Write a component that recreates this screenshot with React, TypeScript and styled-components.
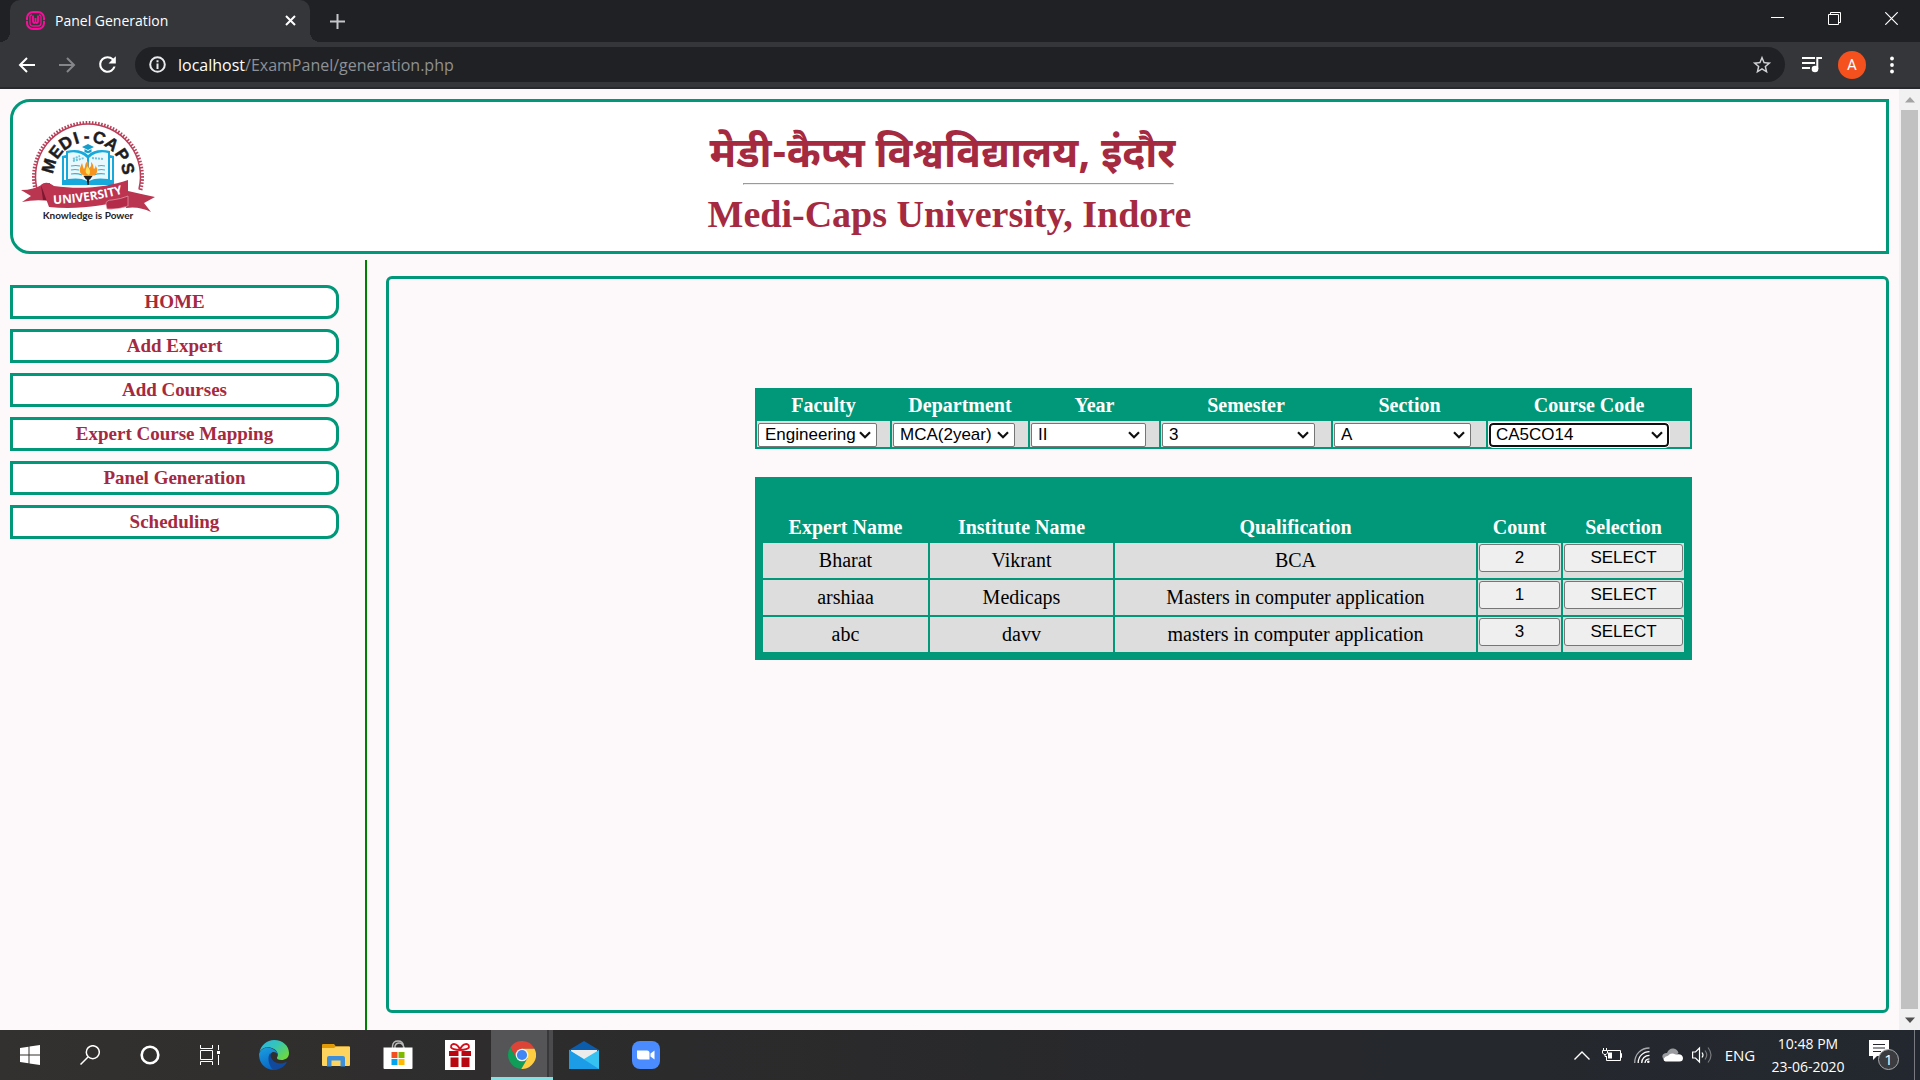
import React from "react";
import styled, { createGlobalStyle } from "styled-components";

const GREEN = "#009879";
const MAROON = "#a52a40";
const PAPER = "#fdf9fb";
const UI_FONT = '"Open Sans", "Noto Sans", sans-serif';
const SERIF = '"Liberation Serif", "Times New Roman", serif';
const SANS = '"Liberation Sans", Arial, sans-serif';

const GlobalStyle = createGlobalStyle`
  *, *::before, *::after { box-sizing: border-box; }
  body { margin: 0; background: ${PAPER}; }
  button { font: inherit; color: inherit; }
`;

const Desktop = styled.div`
  display: flex;
  flex-direction: column;
  min-height: 100vh;
  font-family: ${UI_FONT};
`;

/* ---------- browser frame ---------- */

const TabStrip = styled.div`
  display: flex;
  height: 42px;
  padding-left: 10px;
  background: #202124;
  color: #fff;
`;

const Tab = styled.div`
  position: relative;
  display: flex;
  align-items: center;
  gap: 10px;
  width: 300px;
  padding: 0 10px 2px 16px;
  border-radius: 10px 10px 0 0;
  background: #35363a;
  font-size: 14px;

  &::before,
  &::after {
    content: "";
    position: absolute;
    bottom: 0;
    width: 10px;
    height: 10px;
  }
  &::before {
    right: 100%;
    background: radial-gradient(circle at 0 0, transparent 10px, #35363a 10px);
  }
  &::after {
    left: 100%;
    background: radial-gradient(circle at 100% 0, transparent 10px, #35363a 10px);
  }
`;

const TabTitle = styled.span`
  flex: 1;
`;

const IconButton = styled.button<{ $w?: number }>`
  display: flex;
  align-items: center;
  justify-content: center;
  flex: none;
  width: ${(p) => p.$w ?? 40}px;
  height: 36px;
  padding: 0;
  border: 0;
  background: none;
`;

const NewTab = styled(IconButton)`
  height: 42px;
  margin-left: 7px;
`;

const WindowButtons = styled.div`
  display: flex;
  margin-left: auto;
`;

const Toolbar = styled.div`
  display: flex;
  align-items: center;
  height: 47px;
  padding: 0 8px 0 7px;
  border-bottom: 2px solid #28292c;
  background: #35363a;
  color: #fff;
`;

const Omnibox = styled.div`
  display: flex;
  align-items: center;
  flex: 1;
  height: 35px;
  margin: 0 7px 0 8px;
  padding: 0 3px 0 14px;
  border-radius: 18px;
  background: #202124;
  font-size: 16px;
`;

const Url = styled.a`
  flex: 1;
  margin-left: 12px;
  color: #8e9196;
  text-decoration: none;
`;

const Host = styled.span`
  color: #fff;
`;

const Avatar = styled.span`
  display: flex;
  align-items: center;
  justify-content: center;
  width: 28px;
  height: 28px;
  border-radius: 50%;
  background: #f4511e;
  font: 15px Roboto, sans-serif;
`;

/* ---------- page ---------- */

const Viewport = styled.div`
  display: flex;
  flex: 1;
  background: ${PAPER};
`;

const Page = styled.div`
  display: flex;
  flex-direction: column;
  flex: 1;
  padding: 10px 10px 0;
  font-family: ${SERIF};
  font-size: 20px;
`;

const Scrollbar = styled.div`
  display: flex;
  flex-direction: column;
  width: 21px;
  background: #f1f1f1;
`;

const ScrollArrow = styled.button`
  display: flex;
  align-items: center;
  justify-content: center;
  height: 21px;
  padding: 0;
  border: 0;
  background: none;
`;

const Thumb = styled.div`
  flex: 1;
  margin: 0 2px;
  background: #c1c1c1;
`;

const Banner = styled.header`
  display: grid;
  grid-template-columns: 1fr auto 1fr;
  height: 155px;
  border: 3px solid ${GREEN};
  border-radius: 20px 0 0 20px;
  background: #fff;
  color: ${MAROON};
`;

const LogoBox = styled.div`
  padding: 16px 0 0 5px;
`;

const Titles = styled.div`
  display: flex;
  flex-direction: column;
  align-items: center;
`;

const HindiTitle = styled.h1`
  margin: 29px 14px 0 0;
  font: bold 41px/52px "Noto Sans Devanagari", "Nirmala UI", "Noto Sans", "Liberation Serif", sans-serif;
`;

const Rule = styled.hr`
  align-self: flex-end;
  width: 431px;
  margin: 0 17px 0 0;
  border: 1px inset #eee;
`;

const EnglishTitle = styled.h2`
  margin: 7px 0 0;
  font-size: 38px;
  line-height: 44px;
`;

const Body = styled.div`
  display: flex;
  flex: 1;
  margin-top: 6px;
`;

const Sidebar = styled.nav`
  display: flex;
  flex-direction: column;
  gap: 10px;
  flex: 0 0 357px;
  padding: 25px 26px 0 0;
  border-right: 2px solid green;
`;

const NavLink = styled.a`
  height: 34px;
  border: 3px solid ${GREEN};
  border-radius: 0 12px 12px 0;
  background: #fff;
  color: ${MAROON};
  font-size: 19px;
  font-weight: bold;
  line-height: 28px;
  text-align: center;
  text-decoration: none;
`;

const Panel = styled.main`
  display: flex;
  flex-direction: column;
  align-items: flex-end;
  gap: 28px;
  flex: 1;
  margin: 16px 0 17px 19px;
  padding: 109px 194px 0 0;
  border: 3px solid ${GREEN};
  border-radius: 6px;
`;

const Table = styled.table<{ $frame?: number }>`
  width: 937px;
  border: ${(p) => p.$frame ?? 0}px solid ${GREEN};
  border-collapse: separate;
  border-spacing: 2px;
  table-layout: fixed;
  background: ${GREEN};
  text-align: center;
`;

const Col = styled.col<{ $w: number }>`
  width: ${(p) => p.$w}px;
`;

const Th = styled.th<{ $h: number }>`
  height: ${(p) => p.$h}px;
  padding: 0 0 1px;
  color: #fff;
  line-height: 26px;
  vertical-align: bottom;
`;

const Td = styled.td<{ $h: number; $top?: boolean }>`
  height: ${(p) => p.$h}px;
  padding: ${(p) => (p.$top ? "1px 1px 0" : "0")};
  background: #ddd;
  vertical-align: ${(p) => (p.$top ? "top" : "middle")};
`;

const Picker = styled.label<{ $w: number }>`
  display: grid;
  width: ${(p) => p.$w}px;
  margin-top: 1px;

  > * { grid-area: 1 / 1; }
  > svg { align-self: center; justify-self: end; margin-right: 6px; pointer-events: none; }
`;

const Select = styled.select<{ $focus?: boolean }>`
  appearance: none;
  width: 100%;
  height: 24px;
  padding: 0 0 0 ${(p) => (p.$focus ? 5 : 6)}px;
  border: ${(p) => (p.$focus ? "2px solid #101010" : "1px solid #767676")};
  border-radius: ${(p) => (p.$focus ? 4 : 2)}px;
  outline: ${(p) => (p.$focus ? "1px solid #fff" : "0")};
  background: #fff;
  color: #000;
  font: 17px/20px ${SANS};
`;

const CellButton = styled.button`
  display: block;
  width: 100%;
  height: 28px;
  padding: 0;
  border: 1px solid #767676;
  border-radius: 3px;
  background: #efefef;
  color: #000;
  font: 17px/20px ${SANS};
`;

/* ---------- taskbar ---------- */

const Taskbar = styled.footer`
  display: flex;
  height: 50px;
  padding-right: 5px;
  background: linear-gradient(90deg, #33312f, #2c2b2c 35%, #27282b 60%, #232830);
  color: #fff;
  font-size: 15px;
`;

const TaskButton = styled(IconButton)<{ $active?: boolean }>`
  height: 50px;
  ${(p) =>
    p.$active &&
    `
    border-bottom: 3px solid #85e0e3;
    padding: 3px 0 0;
    background: linear-gradient(90deg, #555557 56px, #38383a 56px, #38383a 58px, #4b4b4d 58px);
  `}
`;

const Apps = styled.div`
  display: flex;
  margin-left: 3px;
`;

const Tray = styled.div`
  display: flex;
  margin-left: auto;
  border-right: 1px solid #777a7e;
`;

const Clock = styled(TaskButton)`
  flex-direction: column;
  font-size: 14px;
  line-height: 23px;
`;

/* ---------- drawings ---------- */

const Chevron = () => (
  <svg width="12" height="8" viewBox="0 0 12 8" fill="none" stroke="#101010" strokeWidth="2.200">
    <path d="M1 1.200 6 6.200 11 1.200" />
  </svg>
);

const crestLetters: [string, number][] = [
  ["M", -74], ["E", -52], ["D", -33], ["I", -17], ["-", -2], ["C", 16], ["A", 36], ["P", 57], ["S", 78],
];

const Crest = () => {
  const ticks = Array.from({ length: 64 }, (_, i) => {
    const a = ((-193 + (i * 206) / 63) * Math.PI) / 180;
    return `M${88 + 52 * Math.cos(a)} ${177 + 52 * Math.sin(a)}L${88 + 56 * Math.cos(a)} ${177 + 56 * Math.sin(a)}`;
  }).join("");
  return (
    <svg width="140" height="108" viewBox="18 118 140 108" role="img" aria-label="Medi-Caps University crest">
      <path d={ticks} stroke="#b8405a" strokeWidth="1.600" />
      <path d="M37 189A52.500 52.500 0 1 1 139 189" fill="#fff" stroke="#b8405a" strokeWidth="1.500" />
      <g fill="#1e1c1e" stroke="#1e1c1e" strokeWidth="0.500" fontFamily={SANS} fontWeight="900" fontSize="17" textAnchor="middle">
        {crestLetters.map(([letter, angle]) => (
          <text key={letter} x="88" y="142" transform={`rotate(${angle} 88 177)`}>{letter}</text>
        ))}
      </g>
      <path d="M62 156 66 155V151C75 149 83 150 88 155 93 150 101 149 110 151V155L114 156V185H62Z" fill="#18a9dc" />
      <path d="M64 158H66V180H64ZM110 158H112V180H110Z" fill="#fff" />
      <path d="M68 153C75 151 82 153 87 158V181C82 178 75 178 68 179ZM108 153C101 151 94 153 89 158V181C94 178 101 178 108 179Z" fill="#e9f8fc" />
      <path d="M73 159 80 156M73 161 84 158M92 158 103 159" stroke="#6cc3df" strokeWidth="2" strokeDasharray="2 1" />
      <path d="M71 166q5-1 9 0M71 170q4-1 8 0M71 174q6-1 11 1M105 166q-4-1-7 0M105 170q-4-1-7 0M105 174q-6-1-11 1" stroke="#3bb0d4" strokeWidth="1.200" fill="none" />
      <path d="M82 147 88 144 94 147 88 150ZM84.500 149 88 151 91.500 149V152Q88 154 84.500 152ZM93 147.500V151" fill="#159dcc" />
      <path d="M85 176C77 173 80 168 82 163 83 166 83 168 84 169 86 166 84 164 88 161 89 163 88 166 89 168 92 166 91 165 91 162 94 165 93 167 94 169 95 168 96 167 95 165 100 171 96 175 92 176Z" fill="#f7941e" />
      <path d="M87 174C84 171 87 168 87 166 90 169 91 172 89 175Z" fill="#ffe05c" />
      <path d="M83.500 176H92.500L90 179.500H86ZM86.800 179H89.300L88.700 185H87.400Z" fill="#231f20" />
      <path d="M21 190Q34 190 43 184L50 183V201Q35 199 22 202L31 196ZM128 191Q141 194 155 197L144 203 151 212Q139 206 126 208Z" fill="#b93550" />
      <path d="M41 185 49 200 43 200ZM128 207 107 208 106 202 128 197Z" fill="#7e1730" />
      <path d="M41 185C45 181 50 183 54 186 82 190 108 187 128 180V199C105 206 76 210 49 207Z" fill="#bd3451" />
      <path d="M106 204Q106 200 112 200 121 199 128 196V206Q118 210 107 209Z" fill="#b32b49" stroke="#e9b5c0" strokeWidth="0.600" />
      <path id="crestBand" d="M51 204Q88 203 125 193" fill="none" />
      <text fill="#fff" fontFamily={UI_FONT} fontWeight="700" fontSize="12" textAnchor="middle">
        <textPath href="#crestBand" startOffset="50%">UNIVERSITY</textPath>
      </text>
      <text x="88" y="219" fill="#252326" fontFamily="Lato, sans-serif" fontWeight="700" fontSize="10" textAnchor="middle">Knowledge is Power</text>
    </svg>
  );
};

const Favicon = () => (
  <svg width="19" height="19" viewBox="0 0 19 19" fill="none" stroke="#ff0a9c">
    <rect x="1" y="1" width="17" height="17" rx="6" strokeWidth="2" />
    <path d="M4 9.500V5.500Q4 4 6 4M13 4Q15 4 15 5.500V12Q15 15 12 15H7Q4 15 4 12V9" strokeWidth="1.300" />
    <path d="M7 4.500V10.500Q7 12 8.300 12 9.500 12 9.500 10.500V7V10.500Q9.500 12 10.700 12 12 12 12 10.500V4.500" strokeWidth="1.800" />
    <path d="M0 9.500H3M16 9.500H19" stroke="#35363a" strokeWidth="0.800" />
  </svg>
);

const Arrow = ({ flip }: { flip?: boolean }) => (
  <svg width="18" height="16" viewBox="0 0 18 16" fill="none" stroke={flip ? "#85868a" : "#fff"} strokeWidth="2">
    <path d={flip ? "M1 8H16M9 1 16 8 9 15" : "M17 8H2M9 1 2 8 9 15"} />
  </svg>
);

const Reload = () => (
  <svg width="25" height="25" viewBox="0 0 24 24" fill="#fff">
    <path d="M17.650 6.350A7.960 7.960 0 0 0 12 4a8 8 0 1 0 7.730 10h-2.080A6 6 0 1 1 12 6c1.660 0 3.140.69 4.220 1.780L13 11h7V4z" />
  </svg>
);

const Info = () => (
  <svg width="17" height="17" viewBox="0 0 17 17" fill="none" stroke="#e8eaed" strokeWidth="2">
    <circle cx="8.500" cy="8.500" r="7.300" />
    <path d="M8.500 7.500V13M8.500 4.200V6.200" />
  </svg>
);

const Star = () => (
  <svg width="22" height="22" viewBox="0 0 24 24" fill="#d0d2d5">
    <path d="M22 9.240l-7.190-.62L12 2 9.190 8.630 2 9.240l5.460 4.730L5.820 21 12 17.270 18.180 21l-1.630-7.030L22 9.240zM12 15.400l-3.760 2.270 1-4.280-3.320-2.880 4.380-.38L12 6.100l1.710 4.040 4.380.38-3.320 2.880 1 4.280L12 15.400z" />
  </svg>
);

const Queue = () => (
  <svg width="20" height="17" viewBox="0 0 20 17">
    <path d="M0 2H13M0 7H13M0 12H8" stroke="#fff" strokeWidth="2" />
    <circle cx="13" cy="13" r="3.300" fill="#fff" />
    <path d="M15.300 13V2H20" stroke="#fff" strokeWidth="2" fill="none" />
  </svg>
);

const Dots = () => (
  <svg width="4" height="18" viewBox="0 0 4 18" fill="#fff">
    <circle cx="2" cy="2.500" r="1.900" /><circle cx="2" cy="9" r="1.900" /><circle cx="2" cy="15.500" r="1.900" />
  </svg>
);

const Start = () => (
  <svg width="20" height="20" viewBox="0 0 20 20" fill="#fff">
    <path d="M0 3 8.500 1.800V9.500H0ZM9.500 1.600 20 0V9.500H9.500ZM0 10.500H8.500V18.200L0 17ZM9.500 10.500H20V20L9.500 18.400Z" />
  </svg>
);

const Search = () => (
  <svg width="20" height="20" viewBox="0 0 20 20" fill="none" stroke="#fff" strokeWidth="1.500">
    <circle cx="12.800" cy="7.200" r="6.500" /><path d="M8 12 0.500 19.500" />
  </svg>
);

const TaskView = () => (
  <svg width="20" height="20" viewBox="0 0 20 20" fill="none" stroke="#fff" strokeWidth="1">
    <path d="M.5 0V3.500H12.500V0M.5 5.500H12.500V14.500H.5ZM.5 20V16.500H12.500V20M18.500 0V5M18.500 10V20" />
    <path d="M17 6H20V9H17Z" fill="#fff" stroke="none" />
  </svg>
);

const Edge = () => (
  <svg width="30" height="30" viewBox="0 0 30 30">
    <defs>
      <linearGradient id="edgeTop" x1="0" y1="0" x2="1" y2="0.700">
        <stop offset="0" stopColor="#2bb3e6" /><stop offset="0.500" stopColor="#35c5b8" /><stop offset="1" stopColor="#6cd83f" />
      </linearGradient>
      <linearGradient id="edgeBody" x1="0" y1="0" x2="0.400" y2="1">
        <stop offset="0" stopColor="#1aa0e0" /><stop offset="1" stopColor="#0a67c4" />
      </linearGradient>
    </defs>
    <path d="M0.500 12C2 5 8 0 15 0 24 0 30 6 30 13 30 18 26 20 22.500 20 19 20 17.500 18.500 18 17.500 20 15 18.500 11 15 9 10 6 3 7 .5 12Z" fill="url(#edgeTop)" />
    <path d="M0 14C2 8 8 6 13 8.500 17 10.500 18 12 18.500 14 17 11.500 13 11 11.500 14 9 20 14 27 22 26.500 19 30 13 30.500 9 28.800 3 26 0 21 0 14Z" fill="url(#edgeBody)" />
    <path d="M11.500 13C8 16 9 25 14 29.800 20 30.300 25 27 27.500 22.800 27.700 22 27 22 26.500 22.300 19 26 10.500 21 11.500 13Z" fill="#114a9c" />
  </svg>
);

const Folder = () => (
  <svg width="28" height="24" viewBox="0 0 28 24">
    <path d="M0 2Q0 1 1 1H12L14 3.500H27Q28 3.500 28 4.500V22H0Z" fill="#e19a05" />
    <path d="M0 5H12L14 3.500H27Q28 3.500 28 4.500V22Q28 23 27 23H1Q0 23 0 22Z" fill="#ffd45e" />
    <path d="M5 23.500V15Q5 13 7 13H21Q23 13 23 15V23.500H18.500V17.500H9.500V23.500Z" fill="#3d8fdc" />
  </svg>
);

const Store = () => (
  <svg width="30" height="30" viewBox="0 0 30 30">
    <path d="M9.500 9V6Q10 1 15 1 20 1 20.500 6V9M12 9V6Q13 3 16 3 20 3 21.500 9" stroke="#b9b9b9" strokeWidth="1.400" fill="none" />
    <path d="M0.500 7.500H29.500V28Q29.500 29 28.500 29H1.500Q.5 29 .5 28Z" fill="#fff" />
    <path d="M8.500 12H14.500V18H8.500Z" fill="#f25022" /><path d="M15.500 12H21.500V18H15.500Z" fill="#7fba00" />
    <path d="M8.500 19H14.500V25H8.500Z" fill="#00a4ef" /><path d="M15.500 19H21.500V25H15.500Z" fill="#ffb900" />
  </svg>
);

const Gift = () => (
  <svg width="30" height="30" viewBox="0 0 30 30">
    <path d="M0 0H30V30H0Z" fill="#fff" />
    <path d="M4 11H13.500V16H4ZM16.500 11H26V16H16.500ZM5.500 17.500H13.500V27H5.500ZM16.500 17.500H24.500V27H16.500Z" fill="#b80710" />
    <path d="M15 10C11 10 5.500 9 6 6.500 6.500 3 12 2.500 15 9.500 18 2.500 23.500 3 24 6.500 24.500 9 19 10 15 10Z" fill="none" stroke="#d5101a" strokeWidth="1.800" />
  </svg>
);

const Chrome = () => (
  <svg width="28" height="28" viewBox="2 2 44 44">
    <path d="M24 14H43.600A22 22 0 0 0 5.540 12.030L15.340 29 24 24Z" fill="#db4437" />
    <path d="M15.340 29 5.540 12.030A22 22 0 0 0 22.860 45.970L32.660 29 24 24Z" fill="#0f9d58" />
    <path d="M32.660 29 22.860 45.970A22 22 0 0 0 43.600 14H24V24Z" fill="#ffcd40" />
    <circle cx="24" cy="24" r="10" fill="#f1f1f1" /><circle cx="24" cy="24" r="8" fill="#4285f4" />
  </svg>
);

const Mail = () => (
  <svg width="30" height="28" viewBox="0 0 30 28">
    <path d="M0 9 15 0 30 9V15H0Z" fill="#0b5cab" />
    <path d="M2 9H28V22H2Z" fill="#ececec" />
    <path d="M0 9 15 18 30 9V28H0Z" fill="#35c1f1" />
    <path d="M0 9 30 28H0Z" fill="#1c9be6" />
  </svg>
);

const Zoom = () => (
  <svg width="28" height="28" viewBox="0 0 28 28">
    <rect width="28" height="28" rx="8" fill="#4a8cff" />
    <path d="M5 9.500H15Q17.500 9.500 17.500 12V18.500H8Q5 18.500 5 16ZM18.500 12.500 22.500 9.500V18.500L18.500 15.500Z" fill="#fff" />
  </svg>
);

const Battery = () => (
  <svg width="20" height="14" viewBox="0 0 20 14" fill="none" stroke="#fff" strokeWidth="1">
    <path d="M6 2.500H18.500V12.500H4.500V8M18.500 5.500H19.500V9.500H18.500" />
    <path d="M1.500 0V2M4.500 0V2M.5 2.500H5.500V5L4 6.500H2L.5 5ZM3 6.500V8.500H5" />
    <path d="M6 4.500H10V10.500H6Z" fill="#fff" stroke="none" />
  </svg>
);

const Wifi = () => (
  <svg width="16" height="16" viewBox="0 0 16 16" fill="none" stroke="#fff" strokeWidth="1.300">
    <path d="M.7 16C.7 7 7 1 15.500 1" stroke="#a8aaad" />
    <path d="M4.200 16C4.200 9.500 9 4.700 15.500 4.700M7.700 16C7.700 11.500 11 8.400 15.500 8.400M11 16Q11.300 12 15.500 11.800" />
    <circle cx="14.300" cy="14.700" r="1.300" fill="#fff" stroke="none" />
  </svg>
);

const Cloud = () => (
  <svg width="21" height="14" viewBox="0 0 21 14">
    <path d="M3 12Q-1 10 1 6.500 2.500 4.500 5 5 7 0 11.500.5 15.500 1 16.500 5L10 10Z" fill="#9a9b9e" />
    <path d="M3.500 13.500Q1.500 13 1.500 11 3 8 6 7.800 9 4 13.500 6.500 20.500 5 21 10 21 13.500 17.500 13.500Z" fill="#fff" />
  </svg>
);

const Speaker = () => (
  <svg width="21" height="18" viewBox="0 0 21 18" fill="none" stroke="#fff" strokeWidth="1.200">
    <path d="M.6 6H3.500L7.500 2V16L3.500 12H.6ZM10 6.500Q12 9 10 11.500" />
    <path d="M13 4.500Q16.500 9 13 13.500M16 1.500Q22 9 16 16.500" stroke="#77797d" />
  </svg>
);

const Notifications = () => (
  <svg width="30" height="32" viewBox="0 0 30 32">
    <path d="M0 1H20V17H8L4 21V17H0Z" fill="#fff" />
    <path d="M4 5.500H16M4 9H16M4 12.500H12" stroke="#25282e" />
    <circle cx="19.500" cy="20.500" r="10" fill="#3a3c40" stroke="#a9abad" />
    <text x="19.500" y="26" fill="#fff" fontFamily={UI_FONT} fontSize="15" textAnchor="middle">1</text>
  </svg>
);

/* ---------- data ---------- */

const links = ["HOME", "Add Expert", "Add Courses", "Expert Course Mapping", "Panel Generation", "Scheduling"];

const filters = [
  { name: "Faculty", value: "Engineering", col: 133, width: 119 },
  { name: "Department", value: "MCA(2year)", col: 136, width: 122 },
  { name: "Year", value: "II", col: 129, width: 115 },
  { name: "Semester", value: "3", col: 170, width: 153 },
  { name: "Section", value: "A", col: 153, width: 137 },
  { name: "Course Code", value: "CA5CO14", col: 202, width: 180, focus: true },
];

const columns = [
  { name: "Expert Name", width: 165 },
  { name: "Institute Name", width: 183 },
  { name: "Qualification", width: 361 },
  { name: "Count", width: 83 },
  { name: "Selection", width: 121 },
];

const experts = [
  { name: "Bharat", institute: "Vikrant", qualification: "BCA", count: 2 },
  { name: "arshiaa", institute: "Medicaps", qualification: "Masters in computer application", count: 1 },
  { name: "abc", institute: "davv", qualification: "masters in computer application", count: 3 },
];

const apps = [
  { name: "Edge", icon: <Edge /> },
  { name: "File Explorer", icon: <Folder /> },
  { name: "Store", icon: <Store /> },
  { name: "Gifts", icon: <Gift /> },
  { name: "Chrome", icon: <Chrome />, active: true },
  { name: "Mail", icon: <Mail /> },
  { name: "Zoom", icon: <Zoom /> },
];

export default function App() {
  return (
    <Desktop>
      <GlobalStyle />
      <TabStrip>
        <Tab>
          <Favicon />
          <TabTitle>Panel Generation</TabTitle>
          <IconButton $w={20} aria-label="Close tab">
            <svg width="11" height="11" viewBox="0 0 11 11" stroke="#fff" strokeWidth="2"><path d="M1 1 10 10M10 1 1 10" /></svg>
          </IconButton>
        </Tab>
        <NewTab aria-label="New tab">
          <svg width="15" height="15" viewBox="0 0 15 15" stroke="#c4c6c9" strokeWidth="2"><path d="M7.500 0V15M0 7.500H15" /></svg>
        </NewTab>
        <WindowButtons>
          <IconButton $w={57} aria-label="Minimize">
            <svg width="13" height="13" viewBox="0 0 13 13" stroke="#fff"><path d="M0 5.500H13" /></svg>
          </IconButton>
          <IconButton $w={57} aria-label="Restore">
            <svg width="13" height="13" viewBox="0 0 13 13" stroke="#fff" fill="none"><path d="M.5 2.500H10.500V12.500H.5ZM2.500 2.500V.5H12.500V10.500H10.500" /></svg>
          </IconButton>
          <IconButton $w={57} aria-label="Close">
            <svg width="13" height="13" viewBox="0 0 13 13" stroke="#fff" strokeWidth="1.200"><path d="M.3 .3 12.700 12.700M12.700 .3 .3 12.700" /></svg>
          </IconButton>
        </WindowButtons>
      </TabStrip>
      <Toolbar>
        <IconButton aria-label="Back"><Arrow /></IconButton>
        <IconButton aria-label="Forward"><Arrow flip /></IconButton>
        <IconButton aria-label="Reload"><Reload /></IconButton>
        <Omnibox>
          <Info />
          <Url href="#"><Host>localhost</Host>/ExamPanel/generation.php</Url>
          <IconButton aria-label="Bookmark"><Star /></IconButton>
        </Omnibox>
        <IconButton aria-label="Media"><Queue /></IconButton>
        <IconButton aria-label="Profile"><Avatar>A</Avatar></IconButton>
        <IconButton aria-label="Menu"><Dots /></IconButton>
      </Toolbar>

      <Viewport>
        <Page>
          <Banner>
            <LogoBox><Crest /></LogoBox>
            <Titles>
              <HindiTitle lang="hi">मेडी-कैप्स विश्वविद्यालय, इंदौर</HindiTitle>
              <Rule />
              <EnglishTitle>Medi-Caps University, Indore</EnglishTitle>
            </Titles>
          </Banner>
          <Body>
            <Sidebar>
              {links.map((l) => <NavLink key={l} href="#">{l}</NavLink>)}
            </Sidebar>
            <Panel>
              <Table>
                <colgroup>{filters.map((f) => <Col key={f.name} $w={f.col} />)}</colgroup>
                <thead>
                  <tr>{filters.map((f) => <Th key={f.name} $h={29}>{f.name}</Th>)}</tr>
                </thead>
                <tbody>
                  <tr>
                    {filters.map((f) => (
                      <Td key={f.name} $h={26} $top>
                        <Picker $w={f.width}>
                          <Select $focus={f.focus} defaultValue={f.value} aria-label={f.name}>
                            <option>{f.value}</option>
                          </Select>
                          <Chevron />
                        </Picker>
                      </Td>
                    ))}
                  </tr>
                </tbody>
              </Table>
              <Table $frame={6}>
                <colgroup>{columns.map((c) => <Col key={c.name} $w={c.width} />)}</colgroup>
                <thead>
                  <tr>{columns.map((c) => <Th key={c.name} $h={56}>{c.name}</Th>)}</tr>
                </thead>
                <tbody>
                  {experts.map((e) => (
                    <tr key={e.name}>
                      <Td $h={35}>{e.name}</Td>
                      <Td $h={35}>{e.institute}</Td>
                      <Td $h={35}>{e.qualification}</Td>
                      <Td $h={35} $top><CellButton>{e.count}</CellButton></Td>
                      <Td $h={35} $top><CellButton>SELECT</CellButton></Td>
                    </tr>
                  ))}
                </tbody>
              </Table>
            </Panel>
          </Body>
        </Page>
        <Scrollbar>
          <ScrollArrow aria-label="Scroll up">
            <svg width="10" height="6" viewBox="0 0 10 6" fill="#a3a3a3"><path d="M0 5.500 5 0 10 5.500Z" /></svg>
          </ScrollArrow>
          <Thumb />
          <ScrollArrow aria-label="Scroll down">
            <svg width="10" height="6" viewBox="0 0 10 6" fill="#505050"><path d="M0 .5 5 6 10 .5Z" /></svg>
          </ScrollArrow>
        </Scrollbar>
      </Viewport>

      <Taskbar>
        <TaskButton $w={60} aria-label="Start"><Start /></TaskButton>
        <TaskButton $w={60} aria-label="Search"><Search /></TaskButton>
        <TaskButton $w={60} aria-label="Cortana">
          <svg width="20" height="20" viewBox="0 0 20 20" fill="none" stroke="#fff" strokeWidth="2.600"><circle cx="10" cy="10" r="8.300" /></svg>
        </TaskButton>
        <TaskButton $w={60} aria-label="Task view"><TaskView /></TaskButton>
        <Apps>
          {apps.map((a) => <TaskButton key={a.name} $w={62} $active={a.active} aria-label={a.name}>{a.icon}</TaskButton>)}
        </Apps>
        <Tray>
          <TaskButton $w={30} aria-label="Hidden icons">
            <svg width="16" height="9" viewBox="0 0 16 9" fill="none" stroke="#fff" strokeWidth="1.400"><path d="M.5 8.500 8 1 15.500 8.500" /></svg>
          </TaskButton>
          <TaskButton $w={30} aria-label="Battery"><Battery /></TaskButton>
          <TaskButton $w={30} aria-label="Network"><Wifi /></TaskButton>
          <TaskButton $w={30} aria-label="OneDrive"><Cloud /></TaskButton>
          <TaskButton $w={30} aria-label="Volume"><Speaker /></TaskButton>
          <TaskButton $w={46}>ENG</TaskButton>
          <Clock $w={90}><span>10:48 PM</span><span>23-06-2020</span></Clock>
          <TaskButton $w={61} aria-label="Notifications"><Notifications /></TaskButton>
        </Tray>
      </Taskbar>
    </Desktop>
  );
}
